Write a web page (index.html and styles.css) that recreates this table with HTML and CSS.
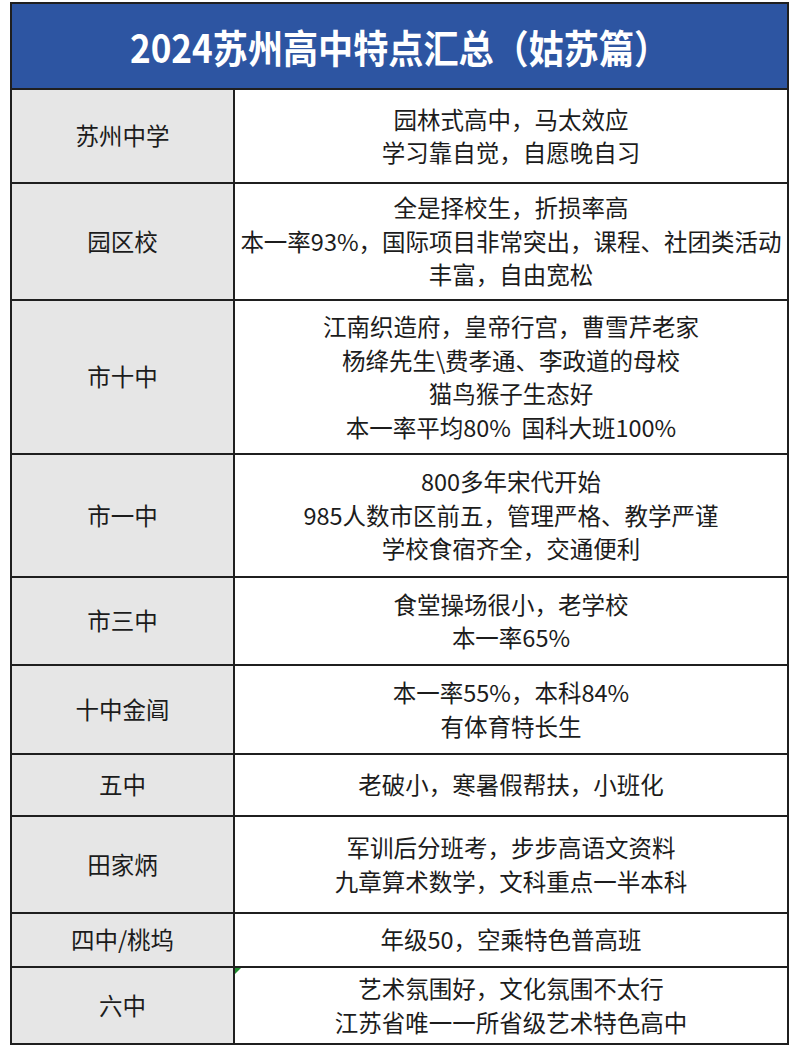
FILE: index.html
```html
<!DOCTYPE html>
<html lang="zh-CN">
<head>
<meta charset="utf-8">
<title>2024苏州高中特点汇总（姑苏篇）</title>
<link rel="stylesheet" href="styles.css">
</head>
<body>
<div class="sheet">
  <div class="title"><span class="title-text">2024苏州高中特点汇总（姑苏篇）</span></div>

  <div class="name r1">苏州中学</div>
  <div class="desc r1"><p>园林式高中，马太效应</p><p>学习靠自觉，自愿晚自习</p></div>

  <div class="name r2">园区校</div>
  <div class="desc r2"><p>全是择校生，折损率高</p><p>本一率93%，国际项目非常突出，课程、社团类活动</p><p>丰富，自由宽松</p></div>

  <div class="name r3">市十中</div>
  <div class="desc r3"><p>江南织造府，皇帝行宫，曹雪芹老家</p><p>杨绛先生\费孝通、李政道的母校</p><p>猫鸟猴子生态好</p><p>本一率平均80%&nbsp;&nbsp;国科大班100%</p></div>

  <div class="name r4">市一中</div>
  <div class="desc r4"><p>800多年宋代开始</p><p>985人数市区前五，管理严格、教学严谨</p><p>学校食宿齐全，交通便利</p></div>

  <div class="name r5">市三中</div>
  <div class="desc r5"><p>食堂操场很小，老学校</p><p>本一率65%</p></div>

  <div class="name r6">十中金阊</div>
  <div class="desc r6"><p>本一率55%，本科84%</p><p>有体育特长生</p></div>

  <div class="name r7">五中</div>
  <div class="desc r7"><p>老破小，寒暑假帮扶，小班化</p></div>

  <div class="name r8">田家炳</div>
  <div class="desc r8"><p>军训后分班考，步步高语文资料</p><p>九章算术数学，文科重点一半本科</p></div>

  <div class="name r9">四中/桃坞</div>
  <div class="desc r9"><p>年级50，空乘特色普高班</p></div>

  <div class="name r10">六中</div>
  <div class="desc r10 flagged"><p>艺术氛围好，文化氛围不太行</p><p>江苏省唯一一所省级艺术特色高中</p></div>
</div>
</body>
</html>
```

FILE: styles.css
```css
html, body {
  margin: 0;
  padding: 0;
  background: #ffffff;
}

body {
  font-family: "Noto Sans CJK SC", "Noto Sans", sans-serif;
  color: #1c1c1c;
}

.sheet {
  margin: 2px 0 0 10px;
  width: 779px;
  box-sizing: border-box;
  display: grid;
  grid-template-columns: 221px 552px;
  grid-template-rows: 84px 92px 115px 152px 121px 86px 87px 60px 95px 52px 75px;
  gap: 2px;
  padding: 2px;
  background: #1f1f1f;
}

.title {
  grid-column: 1 / span 2;
  background: #2d55a2;
  color: #ffffff;
  font-weight: 700;
  font-size: 39px;
  display: flex;
  align-items: center;
  justify-content: center;
}

.title-text {
  display: inline-block;
  transform: scaleX(0.9);
  white-space: nowrap;
}

.name,
.desc {
  display: flex;
  flex-direction: column;
  align-items: center;
  justify-content: center;
  font-size: 23.5px;
  line-height: 33.5px;
  white-space: nowrap;
}

.name {
  background: #e6e6e6;
}

.desc {
  background: #ffffff;
  position: relative;
}

.desc p {
  margin: 0;
}

.flagged::before {
  content: "";
  position: absolute;
  left: 0;
  top: 0;
  width: 0;
  height: 0;
  border-top: 6px solid #1f8a2e;
  border-right: 6px solid transparent;
}
```
